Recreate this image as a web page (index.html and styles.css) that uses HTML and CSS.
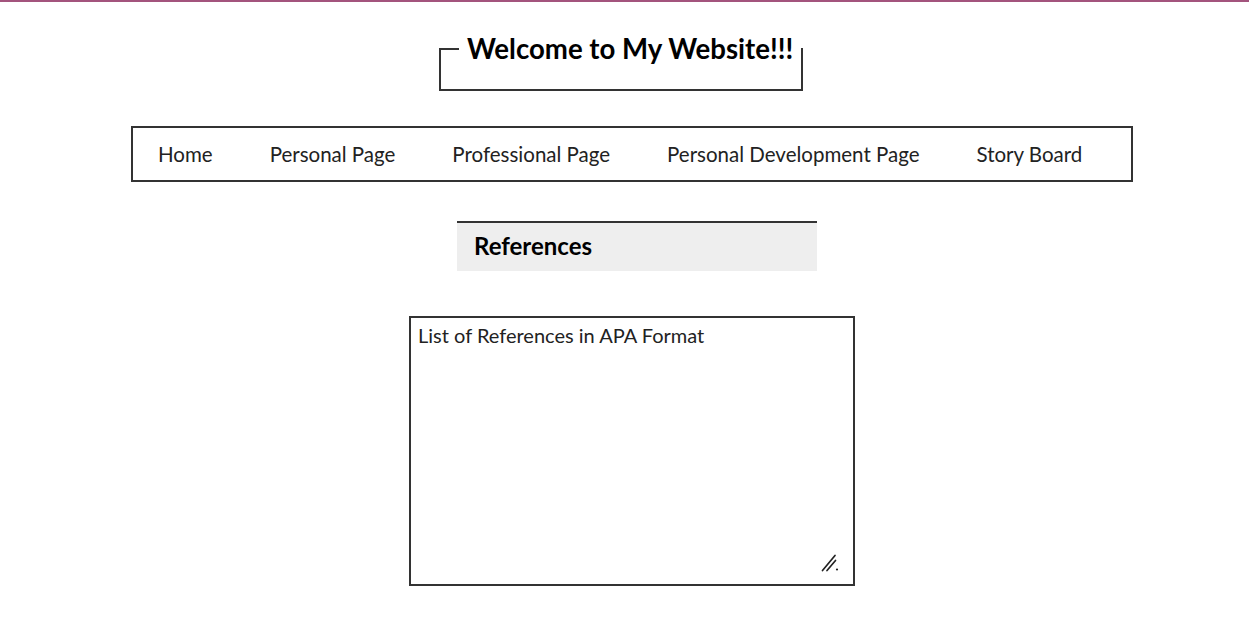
FILE: index.html
```html
<!DOCTYPE html>
<html lang="en">
<head>
<meta charset="utf-8">
<title>Welcome to My Website!!!</title>
<link rel="stylesheet" href="styles.css">
</head>
<body>
<header class="top">
  <fieldset class="title-box">
    <legend class="title">Welcome to My Website!!!</legend>
  </fieldset>
</header>
<nav class="nav">
  <a class="nav-link" href="#">Home</a>
  <a class="nav-link" href="#">Personal Page</a>
  <a class="nav-link" href="#">Professional Page</a>
  <a class="nav-link" href="#">Personal Development Page</a>
  <a class="nav-link" href="#">Story Board</a>
</nav>
<main class="refs">
  <h2 class="refs-title">References</h2>
  <div class="refs-wrap">
    <textarea class="refs-box">List of References in APA Format</textarea>
    <svg class="grip" width="20" height="20" viewBox="0 0 20 20" aria-hidden="true">
      <path d="M2.5 17.5 L15 2.5" stroke="#222" stroke-width="1.7" stroke-linecap="round"/>
      <path d="M7 17.5 L15.5 7.5" stroke="#222" stroke-width="1.7" stroke-linecap="round"/>
      <circle cx="17" cy="16.5" r="1.1" fill="#222"/>
    </svg>
  </div>
</main>
</body>
</html>
```
FILE: styles.css
```css
html, body {
  background: #fff;
}
body {
  margin: 0;
  border-top: 2px solid #a3547d;
  font-family: Lato, "Open Sans", sans-serif;
  color: #222;
}
.top {
  padding-top: 30px;
}
.title-box {
  box-sizing: border-box;
  width: 362px;
  margin: 0 0 0 439px;
  padding: 0 0 23px 18px;
  border: 2px solid #333;
}
.title {
  padding: 0 8px;
  font-size: 27.6px;
  line-height: 34px;
  font-weight: 700;
  color: #000;
  white-space: nowrap;
}
.nav {
  box-sizing: border-box;
  width: 1002px;
  height: 56px;
  margin: 35px 0 0 131px;
  padding: 0 25px;
  border: 2px solid #333;
  display: flex;
  align-items: center;
  gap: 57px;
}
.nav-link {
  font-size: 20.5px;
  color: #222;
  text-decoration: none;
}
.refs {
  display: flex;
  flex-direction: column;
  align-items: flex-start;
}
.refs-title {
  box-sizing: border-box;
  width: 360px;
  height: 50px;
  margin: 39px 0 0 457px;
  padding: 0 17px;
  border-top: 2px solid #333;
  background: #eee;
  font-size: 24px;
  line-height: 46px;
  font-weight: 700;
  color: #000;
}
.refs-wrap {
  position: relative;
  margin: 45px 0 0 409px;
}
.refs-box {
  box-sizing: border-box;
  display: block;
  width: 446px;
  height: 270px;
  margin: 0;
  padding: 5px 7px;
  border: 2px solid #333;
  font-family: inherit;
  font-size: 20px;
  color: #222;
  resize: none;
}
.grip {
  position: absolute;
  right: 15px;
  bottom: 13px;
}
```
